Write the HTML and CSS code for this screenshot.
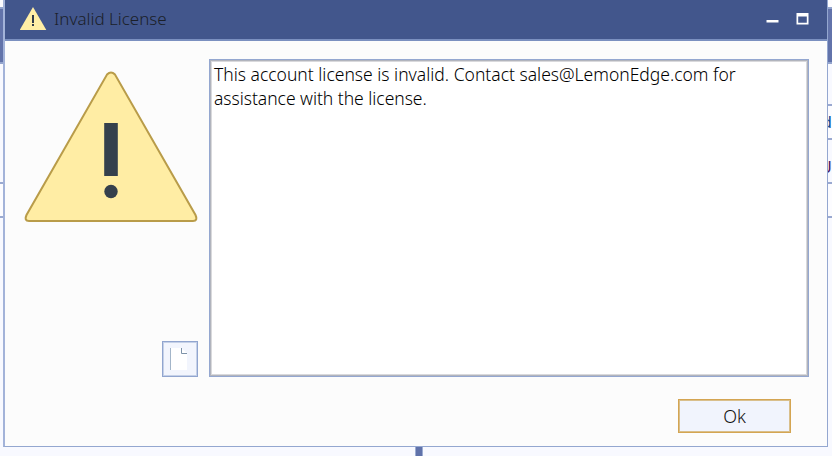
FILE: index.html
```
<!DOCTYPE html>
<html lang="en">

<head>
    <meta charset="UTF-8" />
    <meta name="viewport" content="width=device-width, initial-scale=1.0" />
    <title>Invalid License</title>
    <link rel="stylesheet" href="styles.css">
</head>

<body>
    <!-- main window -->
    <div class="app">
        <div class="app-top"></div>
        <div class="app-bar"></div>
        <div class="app-body">
            <div class="pane pane-left">
                <div class="row row-tall"></div>
                <div class="row row-field"></div>
            </div>
            <div class="splitter"></div>
            <div class="pane pane-right">
                <div class="row row-head"></div>
                <div class="row row-field text-blue"><span>d</span></div>
                <div class="row row-link text-purple"><span>U</span></div>
                <div class="row row-field"></div>
            </div>
        </div>
    </div>

    <!-- license dialog -->
    <div class="dialog">
        <header class="title-bar">
            <svg class="title-icon" width="28" height="24" viewBox="0 0 28 24">
                <path d="M13 0 L26.3 23 H-0.3 Z" fill="#ffeea6" />
                <path d="M12 8h2v8h-2zM12 17h2v2h-2z" fill="#323b49" />
            </svg>
            <h1 class="title">Invalid License</h1>
            <svg class="window-buttons" width="43" height="15" viewBox="0 0 43 15">
                <path d="M0.5 9h12v2.5H0.5z" fill="#fff" />
                <path d="M30.5 2h12v11.5h-12zM32.2 5.5v6.3h8.6V5.5z" fill="#fff" fill-rule="evenodd" />
            </svg>
        </header>

        <main class="content">
            <div class="side">
                <svg class="warning" width="174" height="152" viewBox="0 0 174 152">
                    <path d="M83 3.5 Q87 -0.5 91 3.5 L171.5 144 Q174 150 169 150 H5 Q0 150 2.5 144 Z" fill="#ffeda4" stroke="#b99c49" stroke-width="2" />
                    <rect x="80.2" y="52" width="13.6" height="53" fill="#35404c" />
                    <circle cx="87" cy="120.5" r="6.7" fill="#35404c" />
                </svg>
                <button class="copy-button" aria-label="Copy">
                    <svg width="20" height="24" viewBox="0 0 20 24">
                        <path d="M0 1h11l6 5v17H0z" fill="#fff" />
                        <path d="M0.5 1v22" stroke="#a3b5c9" fill="none" />
                        <path d="M11.5 1v5.5H17" stroke="#7d92a9" fill="none" />
                    </svg>
                </button>
            </div>
            <div class="message">
                <p class="line-one">This account license is invalid. Contact sales@LemonEdge.com for</p>
                <p class="line-two">assistance with the license.</p>
            </div>
        </main>

        <footer class="actions">
            <button class="ok-button">Ok</button>
        </footer>
    </div>
</body>

</html>
```
FILE: styles.css
```
* {
    box-sizing: border-box;
}

body {
    margin: 0;
    width: 832px;
    height: 456px;
    overflow: hidden;
    font-family: "Noto Sans", "Open Sans", sans-serif;
    background-color: #f8f9ff;
}

.app {
    display: flex;
    flex-direction: column;
    height: 456px;
}

.app-top {
    height: 7px;
    background-color: #fcfcff;
}

.app-bar {
    height: 57px;
    background-color: #6273aa;
    border-top: 2px solid #93a4cd;
    border-bottom: 2px solid #93a4cd;
}

.app-body {
    display: flex;
    flex: 1;
}

.pane-left {
    width: 415px;
}

.pane-right {
    flex: 1;
}

.splitter {
    width: 8px;
    background-color: #6072aa;
    border-left: 1px solid #9dadd2;
    border-right: 1px solid #9dadd2;
}

.row {
    border-bottom: 2px solid #9aa9d0;
    display: flex;
    align-items: center;
    justify-content: flex-end;
    font-size: 17px;
    line-height: 20px;
}

.row-tall {
    height: 120px;
}

.row-head {
    height: 42px;
}

.row-field {
    height: 34px;
    background-color: #fcfcff;
}

.row-link {
    height: 44px;
    padding-top: 12px;
}

.text-blue {
    color: #174e94;
}

.text-purple {
    color: #4b1b66;
}

.dialog {
    position: absolute;
    left: 3px;
    top: 0;
    width: 825px;
    height: 447px;
    display: flex;
    flex-direction: column;
    background-color: #fcfcfc;
    border: 1px solid #94a7d0;
    border-top: 0;
    border-left: 2px solid #a3b3d9;
}

.title-bar {
    display: flex;
    align-items: center;
    height: 41px;
    padding: 0 18px 2px 15px;
    background-color: #42568c;
    border-bottom: 2px solid #7b90c0;
}

.title {
    margin: 0 0 0 6px;
    flex: 1;
    font-size: 17px;
    font-weight: 350;
    color: #1b1f29;
}

.content {
    display: flex;
    height: 336px;
    padding: 18px 18px 0 19px;
}

.side {
    display: flex;
    flex-direction: column;
    justify-content: space-between;
    width: 185px;
    padding-top: 12px;
}

.copy-button {
    display: flex;
    align-items: center;
    justify-content: center;
    width: 36px;
    height: 36px;
    margin-left: 138px;
    padding: 0;
    background-color: #f2f5fd;
    border: 1px solid #91a5cf;
    box-shadow: inset 0 0 0 1px #c5d1e8;
}

.message {
    flex: 1;
    padding: 2px 4px;
    background-color: #fff;
    border: 1px solid #94a7d0;
    box-shadow: inset 0 0 0 1px #b1b4bd, inset 0 0 0 2px #d9d9dc;
    font-size: 17.5px;
    font-weight: 300;
    line-height: 24px;
    color: #000;
}

.message p {
    margin: 0;
    white-space: nowrap;
}

.line-two {
    letter-spacing: -0.03px;
}

.actions {
    display: flex;
    justify-content: flex-end;
    padding: 22px 36px 0 0;
}

.ok-button {
    width: 113px;
    height: 34px;
    padding: 0;
    font-family: inherit;
    font-size: 18px;
    font-weight: 300;
    color: #111;
    background-color: #f1f4fd;
    border: 1px solid #d4a552;
    box-shadow: inset 0 0 0 1px #d9bf8c;
}
```
